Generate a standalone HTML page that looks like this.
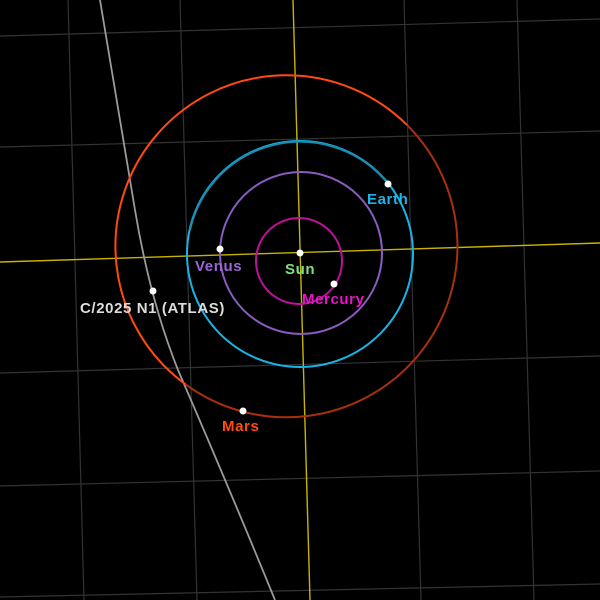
<!DOCTYPE html>
<html><head><meta charset="utf-8"><style>
html,body{margin:0;padding:0;background:#000;width:600px;height:600px;overflow:hidden}
svg{display:block}
text{font-family:"Liberation Sans",sans-serif;font-weight:bold;font-size:15px;letter-spacing:0.6px}
</style></head><body>
<svg width="600" height="600" viewBox="0 0 600 600">
<rect width="600" height="600" fill="#000"/>
<g stroke="#333" stroke-width="1.2" fill="none">
<line x1="68" y1="0" x2="84" y2="600"/>
<line x1="180" y1="0" x2="197" y2="600"/>
<line x1="404" y1="0" x2="421" y2="600"/>
<line x1="517" y1="0" x2="534" y2="600"/>
<line x1="0" y1="36" x2="600" y2="19"/>
<line x1="0" y1="147" x2="600" y2="131"/>
<line x1="0" y1="373" x2="600" y2="356"/>
<line x1="0" y1="486" x2="600" y2="471"/>
<line x1="0" y1="597" x2="600" y2="584"/>
</g>
<g stroke="#c8b400" stroke-width="1.4">
<line x1="293" y1="0" x2="310" y2="600"/>
<line x1="0" y1="262" x2="600" y2="243"/>
</g>
<path d="M100,0 Q118,110 135,210 Q150,300 178,370 Q230,490 275,600" stroke="#9a9a9a" stroke-width="1.8" fill="none"/>
<path d="M407,125 A171,171 0 0 1 185.5,384.3" stroke="#a8300f" stroke-width="2" fill="none"/>
<path d="M407,125 A171,171 0 1 0 185.5,384.3" stroke="#ff4a12" stroke-width="2" fill="none"/>
<circle cx="300" cy="254" r="113" stroke="#18b4e8" stroke-width="2" fill="none"/>
<path d="M190,230 A113,113 0 0 1 385,180" stroke="#1a8cb0" stroke-width="2" fill="none"/>
<circle cx="301" cy="253" r="81" stroke="#8a5cc0" stroke-width="2" fill="none"/>
<circle cx="299" cy="261" r="43" stroke="#c0109a" stroke-width="2" fill="none"/>
<g fill="#fff">
<circle cx="300" cy="253" r="3.5"/>
<circle cx="220" cy="249" r="3.5"/>
<circle cx="388" cy="184" r="3.5"/>
<circle cx="334" cy="284" r="3.5"/>
<circle cx="243" cy="411" r="3.5"/>
<circle cx="153" cy="291" r="3.5"/>
</g>
<text x="367" y="204" fill="#20b4ec">Earth</text>
<text x="195" y="271" fill="#9a66d8">Venus</text>
<text x="285" y="274" fill="#80e080">Sun</text>
<text x="302" y="304" fill="#e814c8">Mercury</text>
<text x="222" y="431" fill="#ff4a12">Mars</text>
<text x="80" y="313" fill="#dddddd">C/2025 N1 (ATLAS)</text>
</svg>
</body></html>
